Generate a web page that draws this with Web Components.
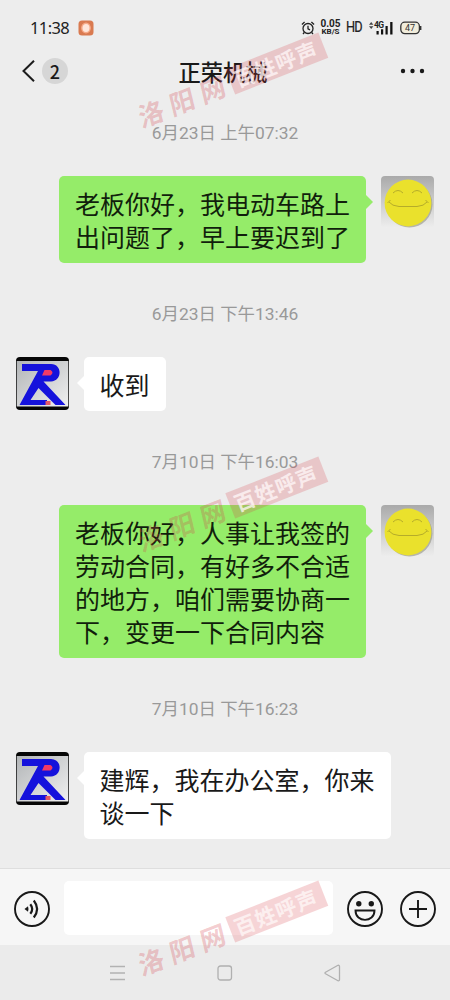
<!DOCTYPE html>
<html lang="zh-CN"><head><meta charset="utf-8"><title>正荣机械</title>
<style>
html,body{margin:0;padding:0}
body{width:450px;height:1000px;overflow:hidden;background:#ededed;color:#191919;font-family:"Noto Sans CJK SC",sans-serif}
</style></head><body>
<chat-screen></chat-screen>
<script>
const def=(name,html,after)=>customElements.define(name,class extends HTMLElement{
  constructor(){super();this.attachShadow({mode:'open'}).innerHTML=html;}
  connectedCallback(){if(after)after(this);}
});

def('status-bar',`<style>
:host{display:flex;flex:none;align-items:center;padding:18px 28px 0 30px;height:19px;color:#222}
.t{font:16.5px/19px "Noto Sans",sans-serif;letter-spacing:-.6px;width:48px;white-space:nowrap}
.g{flex:1}svg{display:block;flex:none}
.s{display:flex;flex-direction:column;width:21px;margin:0 5px 0 5px;font:bold 10px/9px "Roboto",sans-serif;text-align:center;white-space:nowrap}
.s span{display:block}.s span+span{font-size:8px;line-height:8px}
.hd{font:15px/19px "Roboto",sans-serif;width:17px;letter-spacing:-1px;transform:scaleX(.85);transform-origin:0 50%;-webkit-text-stroke:.2px;margin-right:6px}
</style>
<span class="t">11:38</span>
<svg width="16" height="16" viewBox="0 0 16 16"><rect x=".5" y=".5" width="15" height="15" rx="3.5" fill="#d97a50"/><ellipse cx="8" cy="8" rx="4.200" ry="4.800" fill="#ffe6da" stroke="#f6aa88" stroke-width="1.400"/></svg>
<span class="g"></span>
<svg width="14" height="14" viewBox="0 0 14 14" fill="none" stroke="#222" stroke-width="1.300"><circle cx="7" cy="7.500" r="5"/><path d="M7 4.800v3l2 1M.9 3.500 3.600 1M13.100 3.500 10.400 1M3.300 11.500 2 13M10.700 11.500 12 13"/></svg>
<span class="s"><span>0.05</span><span>KB/S</span></span>
<span class="hd">HD</span>
<svg width="24" height="14" viewBox="0 0 24 14" style="margin-right:7px"><path d="M0 3.700 2.200 1 4.400 3.700zM0 5.300h4.400L2.200 8z" fill="#444"/><text x="5" y="7.300" font-family="Roboto" font-size="8.500" font-weight="bold" fill="#222" textLength="10">4G</text><path d="M7.500 10h2.200v3.500H7.500zM12 8.300h2.200v5.200H12zM16.500 5h2.200v8.500h-2.200zM21.200 1h2.300v12.500h-2.300z" fill="#111"/></svg>
<svg width="22" height="14" viewBox="0 0 22 14"><rect x=".8" y="1.200" width="18.600" height="11.400" rx="4" fill="#f1eddc" stroke="#333" stroke-width="1.300"/><path d="M20.700 5v4" stroke="#333" stroke-width="1.400"/><text x="10" y="10.200" text-anchor="middle" font-family="Roboto" font-size="9" fill="#333">47</text></svg>`);

def('chat-header',`<style>
:host{display:grid;flex:none;grid-template-columns:150px 1fr 150px;align-items:center;height:66px;box-sizing:border-box;padding:2px 0 0}
.l{display:flex;align-items:center;padding-left:22px}
b{font:500 18px/26px "Noto Sans CJK SC",sans-serif;width:26px;height:26px;border-radius:50%;background:#d6d6d6;text-align:center;margin-left:7px}
h1{margin:0;font:500 22.300px/30px "Noto Sans CJK SC",sans-serif;text-align:center;white-space:nowrap;transform:translateX(-2px)}
.r{display:flex;justify-content:flex-end;padding-right:25px}svg{display:block}
</style><div class="l"><svg width="13" height="22" viewBox="0 0 13 22"><path d="M12 .8 1.500 11 12 21.200" fill="none" stroke="#1c1c1c" stroke-width="2"/></svg><b>2</b></div><h1>正荣机械</h1>
<div class="r"><svg width="25" height="6" viewBox="0 0 25 6" fill="#191919"><circle cx="3" cy="3" r="2.200"/><circle cx="12.500" cy="3" r="2.200"/><circle cx="22" cy="3" r="2.200"/></svg></div>`);

def('time-stamp',`<style>:host{display:block;height:20px;font:17.400px/20px "Roboto","Noto Sans CJK SC",sans-serif;color:#999;text-align:center;white-space:nowrap}</style><slot></slot>`);

def('smile-avatar',`<style>:host{display:block;width:53px;height:53px;flex:none}svg{display:block}</style>
<svg width="53" height="53" viewBox="0 0 53 53"><defs><linearGradient id="g" x2="0" y2="1"><stop stop-color="#aaa"/><stop offset="1" stop-color="#eee"/></linearGradient></defs><rect width="53" height="52" rx="4" fill="url(#g)"/><circle cx="28.500" cy="28.500" r="23" fill="#9a9a8a" opacity=".65"/><circle cx="27" cy="27" r="23.400" fill="#eae12c"/><g fill="none" stroke="#b5ac2a" stroke-width="1"><path d="M12 17q5-5 10 0M31 17q5-5 10 0M8 26q3 4 10 4.500h18q7-.5 10-4.500M6.500 27l3-3M44.500 24l3 3"/></g></svg>`);

def('logo-avatar',`<style>:host{display:block;width:53px;height:53px;flex:none}svg{display:block}</style>
<svg width="53" height="53" viewBox="0 0 53 53"><defs><linearGradient id="g" y2="1"><stop stop-color="#b2b5b7"/><stop offset="1" stop-color="#f0f0f0"/></linearGradient><clipPath id="c"><rect width="53" height="53" rx="4"/></clipPath></defs><g clip-path="url(#c)"><rect width="53" height="53" fill="#060606"/><rect x=".7" y="4" width="51.600" height="45.500" fill="url(#g)"/><path d="M6 7H35C46.500 7 46.500 24 35 24.500H27.500L49.500 48H39.500L22.500 31 14.500 43H31V48H3.500L22 14H6Z" fill="#1512dc"/><path d="M28.500 13h6q4 2.500 0 5.500H26z" fill="#f23a66"/><path d="M29.500 44h5v4h-5z" fill="#e35a68"/></g></svg>`);

def('chat-message',`<style>
:host{display:flex;align-items:flex-start;justify-content:flex-start;padding:0 16px}
:host([mine]){flex-direction:row-reverse}
.b{position:relative;margin-left:14.500px;padding:10.500px 16px;border-radius:5px;background:#fff;font-size:25px;line-height:33px;white-space:nowrap;box-sizing:border-box}
:host([mine]) .b{margin:0 15px 0 0;background:#95ec69;color:#111f0c}
.b::before{content:"";position:absolute;left:-7px;top:19px;border:7px solid transparent;border-left:0;border-right-color:#fff}
:host([mine]) .b::before{left:auto;right:-7px;border:7px solid transparent;border-right:0;border-left-color:#95ec69}
</style><slot name="avatar"></slot><div class="b"><slot></slot></div>`);

def('input-bar',`<style>
:host{display:flex;flex:none;align-items:center;height:77px;box-sizing:border-box;border-top:1.500px solid #dedede;background:#f6f6f6;padding:3px 13px 0 14px}
.f{flex:none;width:269px;height:54px;border-radius:5px;background:#fff;margin:-2px 14px 0 13.500px}
svg{display:block;flex:none}svg+svg{margin-left:17px}
</style>
<svg width="36" height="36" viewBox="0 0 36 36" fill="none" stroke="#191919" stroke-width="1.900"><circle cx="18" cy="18" r="17"/><path d="M10.500 18 14 15.200Q15 18 14 20.800Z" fill="#191919" stroke="none"/><path d="M16.300 13.200q3.800 4.800 0 9.600M19.800 9.500q6.600 8.500 0 17" stroke-width="2.200"/></svg>
<div class="f"></div>
<svg width="36" height="36" viewBox="0 0 36 36" fill="none" stroke="#191919" stroke-width="1.900"><circle cx="18" cy="18" r="17"/><g fill="#191919" stroke="none"><circle cx="11.800" cy="12.800" r="2.700"/><circle cx="24.300" cy="12.800" r="2.700"/></g><path d="M8.500 19.500H27.500C27.500 32 8.500 32 8.500 19.500Z"/></svg>
<svg width="36" height="36" viewBox="0 0 36 36" fill="none" stroke="#191919" stroke-width="1.900"><circle cx="18" cy="18" r="17"/><path d="M18 9v18M9 18h18"/></svg>`);

def('nav-bar',`<style>:host{display:grid;flex:none;box-sizing:border-box;grid-template-columns:16px 16px 18px;column-gap:91px;justify-content:start;align-items:center;height:55px;padding-left:110px;background:#ebebeb}svg{display:block}</style>
<svg width="16" height="16" viewBox="0 0 16 16" stroke="#b2b2b2" stroke-width="1.500"><path d="M0 1.500h15M0 8h15M0 14.500h15"/></svg>
<svg width="16" height="16" viewBox="0 0 16 16" fill="none" stroke="#b0b0b0" stroke-width="1.300"><rect x="1" y="1" width="13.500" height="14" rx="2.500"/></svg>
<svg width="18" height="18" viewBox="0 0 18 18" fill="none" stroke="#b0b0b0" stroke-width="1.300" stroke-linejoin="round"><path d="M1.500 8.200Q.500 9 1.500 9.800L14 16.800Q15.500 17 15.500 15.500V2.500Q15.500 1 14 1.300Z"/></svg>`);

def('site-watermark',`<style>
:host{position:absolute;left:132px;width:198px;height:28px;display:flex;align-items:center;transform:rotate(-21.500deg);pointer-events:none;white-space:nowrap;color:rgba(211,60,72,.27)}
.a{font:bold 26px/28px "Noto Sans CJK SC",sans-serif;letter-spacing:7px;width:98px;transform:skewX(-8deg)}
.b{width:100px;height:27px;background:rgba(216,60,70,.22);display:flex;justify-content:center}
.b span{color:rgba(255,248,248,.75);font:bold 21px/26px "Noto Sans CJK SC",sans-serif;letter-spacing:1px;transform:translateX(-1px)}
</style><span class="a">洛阳网</span><div class="b"><span>百姓呼声</span></div>`,
el=>{el.style.top=el.getAttribute('top')+'px';});

def('chat-screen',`<style>
:host{position:relative;display:flex;flex-direction:column;width:450px;height:1000px;overflow:hidden;background:#ededed}
main{flex:1;min-height:0;display:flex;flex-direction:column;padding-top:20px}
time-stamp{flex:none;margin-bottom:33px}
chat-message{flex:none;margin-bottom:41px}
chat-message:last-child{margin-bottom:0}
</style>
<status-bar></status-bar><chat-header></chat-header>
<main>
<time-stamp>6月23日 上午07:32</time-stamp>
<chat-message mine><smile-avatar slot="avatar"></smile-avatar>老板你好，我电动车路上<br>出问题了，早上要迟到了</chat-message>
<time-stamp>6月23日 下午13:46</time-stamp>
<chat-message><logo-avatar slot="avatar"></logo-avatar>收到</chat-message>
<time-stamp>7月10日 下午16:03</time-stamp>
<chat-message mine><smile-avatar slot="avatar"></smile-avatar>老板你好，人事让我签的<br>劳动合同，有好多不合适<br>的地方，咱们需要协商一<br>下，变更一下合同内容</chat-message>
<time-stamp>7月10日 下午16:23</time-stamp>
<chat-message><logo-avatar slot="avatar"></logo-avatar>建辉，我在办公室，你来<br>谈一下</chat-message>
</main>
<input-bar></input-bar><nav-bar></nav-bar>
<site-watermark top="67"></site-watermark><site-watermark top="491"></site-watermark><site-watermark top="915"></site-watermark>`);
</script></body></html>
